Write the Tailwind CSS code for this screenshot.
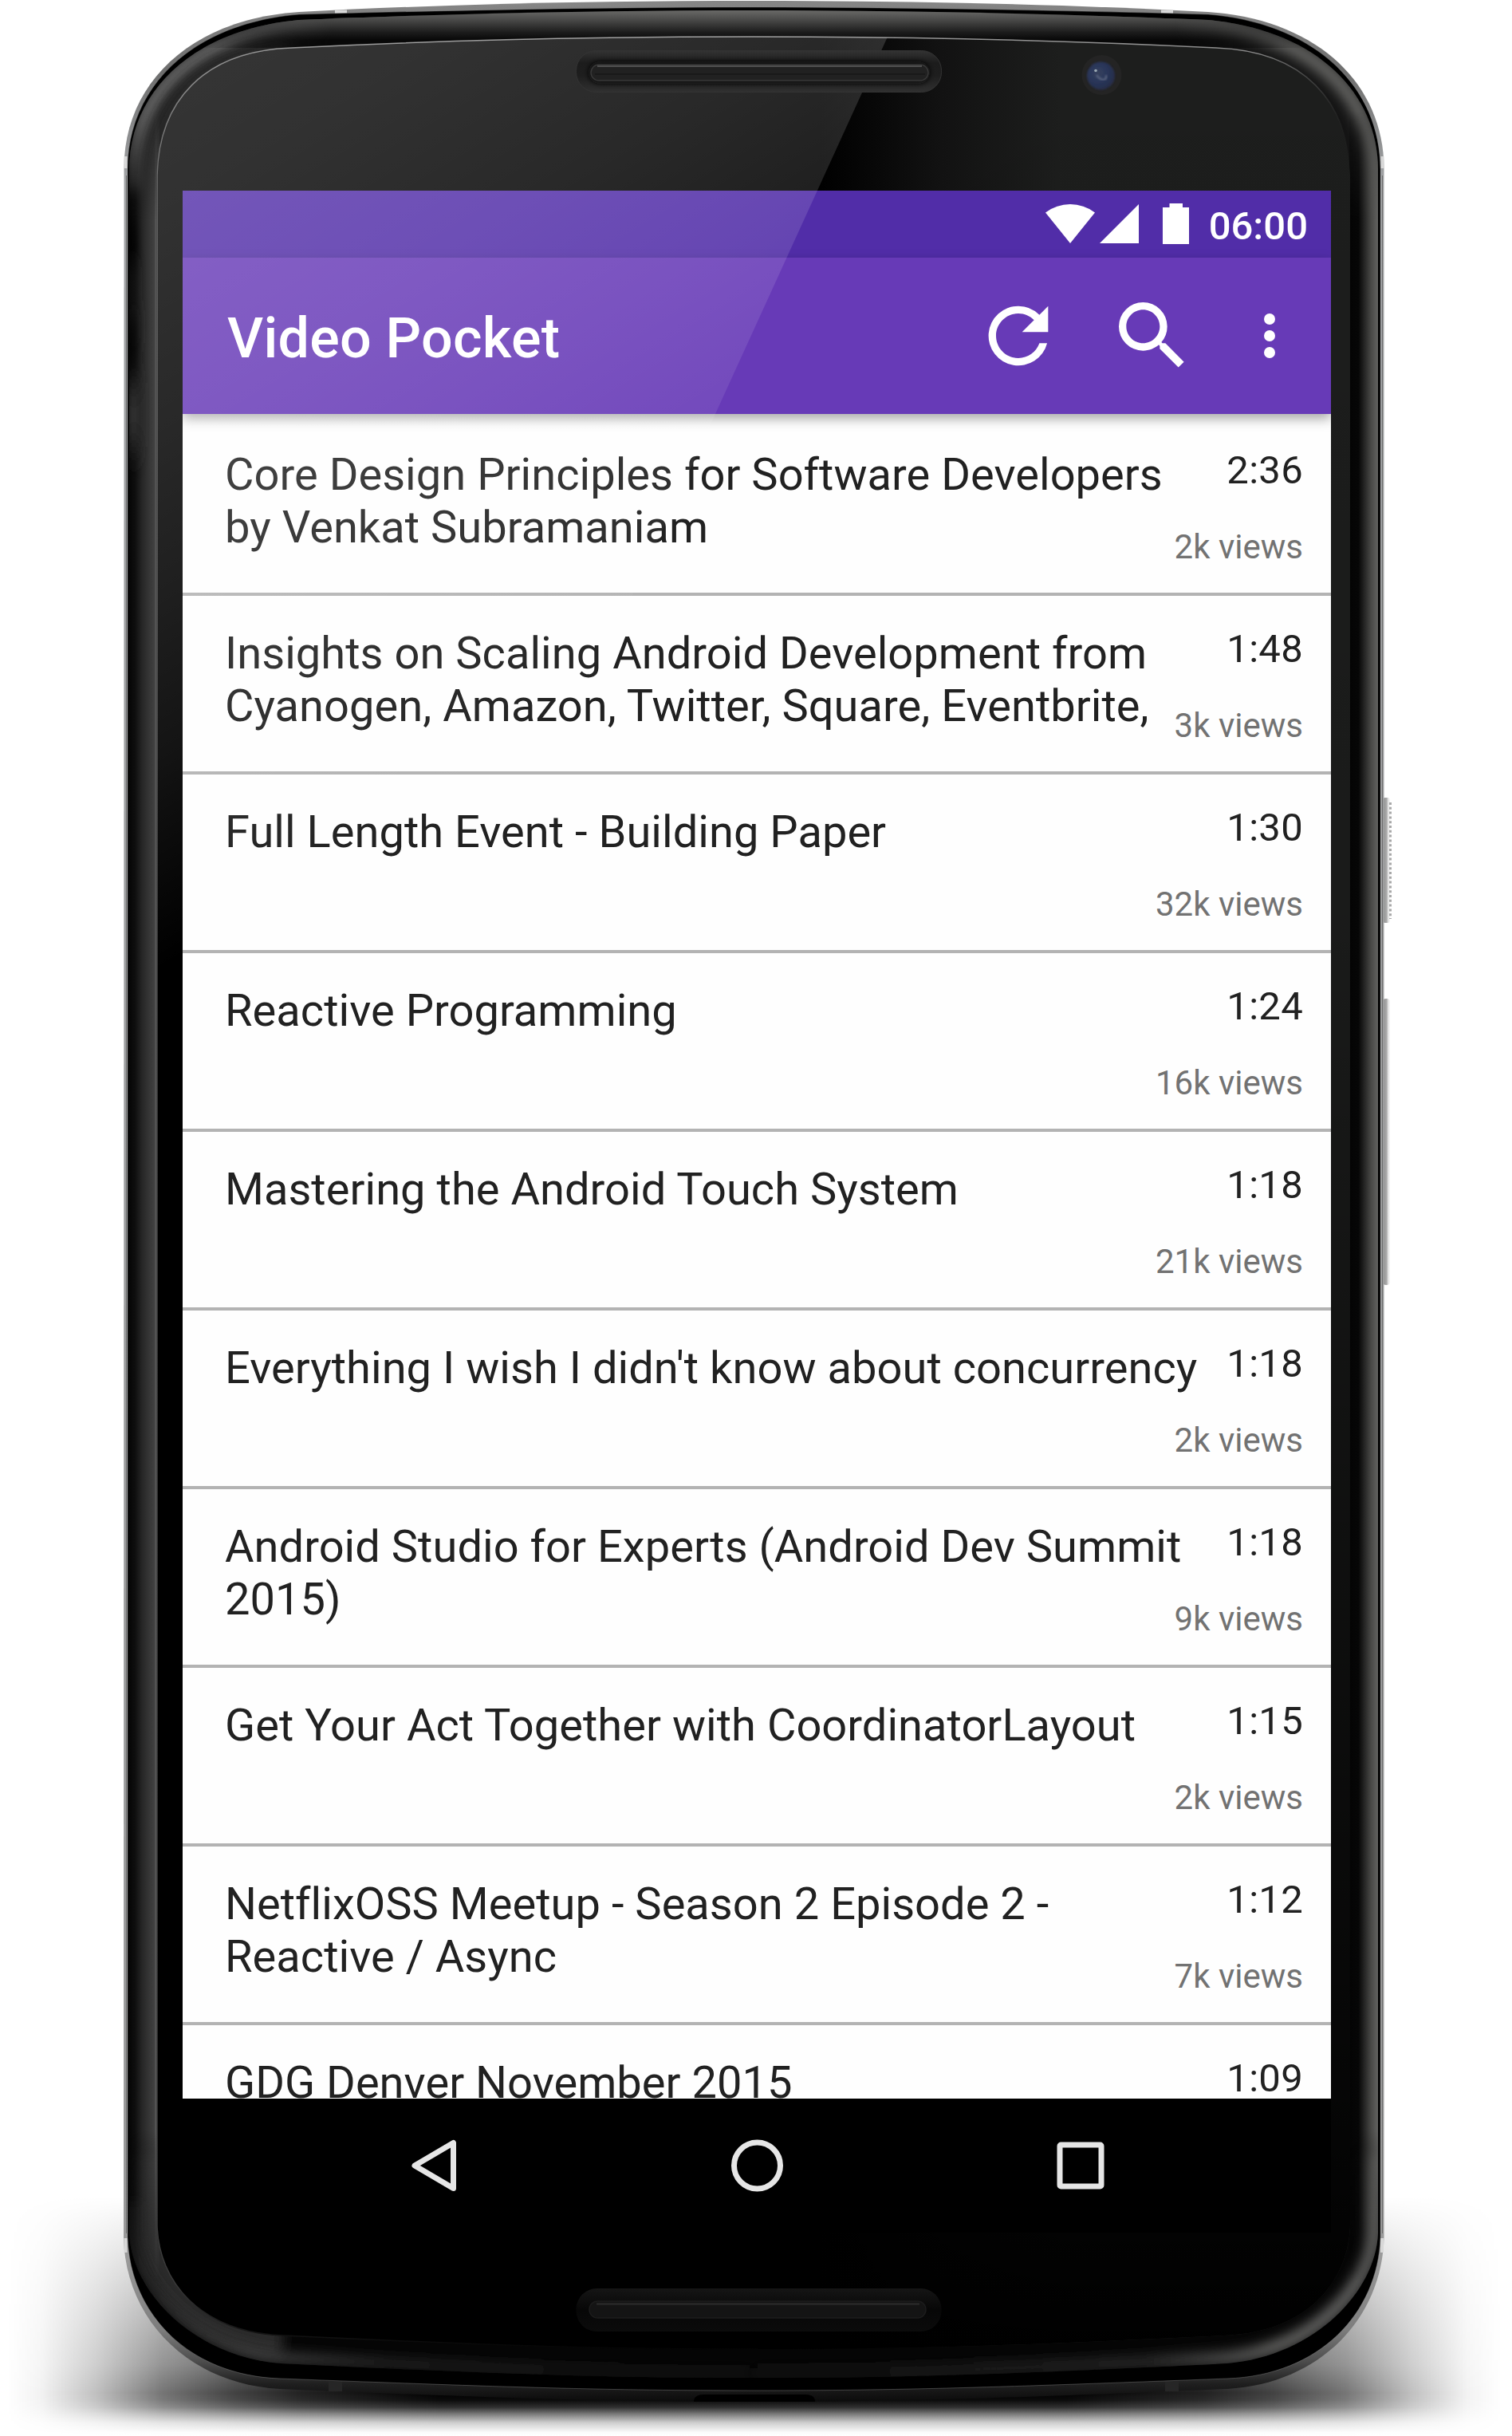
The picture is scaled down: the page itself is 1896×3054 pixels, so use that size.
<!DOCTYPE html>
<html lang="en">
<head>
<meta charset="utf-8">
<title>Video Pocket</title>
<script src="https://cdn.jsdelivr.net/npm/@tailwindcss/browser@4"></script>
</head>
<body class="bg-white">
<main class="relative w-[1896px] h-[3054px] overflow-hidden font-[Roboto,sans-serif]">

  <!-- Phone body -->
  <svg class="absolute inset-0" width="1896" height="3054" viewBox="0 0 1896 3054" fill="none" aria-hidden="true">
    <defs>
      <linearGradient id="shX" gradientUnits="userSpaceOnUse" x1="0" x2="1896" y1="0" y2="0">
        <stop offset="0.005" stop-color="#000" stop-opacity="0"/><stop offset="0.027" stop-color="#000" stop-opacity=".05"/>
        <stop offset="0.064" stop-color="#000" stop-opacity=".25"/><stop offset="0.107" stop-color="#000" stop-opacity=".54"/>
        <stop offset="0.155" stop-color="#000" stop-opacity=".74"/><stop offset="0.2" stop-color="#000" stop-opacity=".87"/>
        <stop offset="0.29" stop-color="#000"/><stop offset="0.705" stop-color="#000"/>
        <stop offset="0.797" stop-color="#000" stop-opacity=".87"/><stop offset="0.842" stop-color="#000" stop-opacity=".74"/>
        <stop offset="0.89" stop-color="#000" stop-opacity=".54"/><stop offset="0.933" stop-color="#000" stop-opacity=".25"/>
        <stop offset="0.97" stop-color="#000" stop-opacity=".05"/><stop offset="0.993" stop-color="#000" stop-opacity="0"/>
      </linearGradient>
      <linearGradient id="shY" gradientUnits="userSpaceOnUse" x1="0" x2="0" y1="2754" y2="3054">
        <stop offset="0" stop-color="#000"/><stop offset=".2" stop-color="#3a3a3a"/><stop offset=".45" stop-color="#808080"/>
        <stop offset=".7" stop-color="#c4c4c4"/><stop offset=".82" stop-color="#fff"/><stop offset=".85" stop-color="#f4f4f4"/><stop offset=".88" stop-color="#cfcfcf"/>
        <stop offset=".91" stop-color="#808080"/><stop offset=".945" stop-color="#303030"/><stop offset=".985" stop-color="#040404"/><stop offset="1" stop-color="#000"/>
      </linearGradient>
      <mask id="shM" maskUnits="userSpaceOnUse" x="0" y="2754" width="1896" height="300"><rect y="2754" width="1896" height="300" fill="url(#shY)"/></mask>
      <linearGradient id="metal" gradientUnits="userSpaceOnUse" x1="0" x2="0" y1="0" y2="3012">
        <stop offset="0" stop-color="#868686"/><stop offset=".03" stop-color="#6e6e6e"/><stop offset=".075" stop-color="#a2a4a6"/><stop offset=".94" stop-color="#9a9a9a"/>
        <stop offset=".97" stop-color="#7c7c7c"/><stop offset=".983" stop-color="#4c4c4c"/><stop offset=".992" stop-color="#202020"/><stop offset="1" stop-color="#0a0a0a"/>
      </linearGradient>
      <linearGradient id="leftRing" gradientUnits="userSpaceOnUse" x1="162" x2="198" y1="0" y2="0">
        <stop offset="0" stop-color="#060606"/><stop offset=".2" stop-color="#0e0e0e"/><stop offset=".45" stop-color="#262626"/><stop offset=".88" stop-color="#414141"/><stop offset=".93" stop-color="#5a5a5a"/><stop offset="1" stop-color="#4a4a4a"/>
      </linearGradient>
      <linearGradient id="rightRing" gradientUnits="userSpaceOnUse" x1="1693" x2="1728" y1="0" y2="0">
        <stop offset="0" stop-color="#040404"/><stop offset=".3" stop-color="#060606"/><stop offset=".75" stop-color="#484846"/><stop offset="1" stop-color="#626260"/>
      </linearGradient>
      <linearGradient id="topRing" gradientUnits="userSpaceOnUse" x1="0" x2="0" y1="12" y2="50">
        <stop offset="0" stop-color="#6c6c6a"/><stop offset=".35" stop-color="#484847"/><stop offset=".75" stop-color="#1c1c1c"/><stop offset="1" stop-color="#080808"/>
      </linearGradient>
      <linearGradient id="topFade" gradientUnits="userSpaceOnUse" x1="250" x2="1640" y1="0" y2="0">
        <stop offset="0" stop-color="#000"/><stop offset=".12" stop-color="#fff"/><stop offset=".88" stop-color="#fff"/><stop offset="1" stop-color="#000"/>
      </linearGradient>
      <mask id="topM" maskUnits="userSpaceOnUse" x="150" y="0" width="1600" height="100"><rect x="250" width="1390" height="100" fill="url(#topFade)"/></mask>
      <linearGradient id="fadeY" gradientUnits="userSpaceOnUse" x1="0" x2="0" y1="140" y2="2860">
        <stop offset="0" stop-color="#000"/><stop offset=".05" stop-color="#fff"/><stop offset=".93" stop-color="#fff"/><stop offset="1" stop-color="#000"/>
      </linearGradient>
      <mask id="sideM" maskUnits="userSpaceOnUse" x="150" y="0" width="1600" height="3054"><rect x="150" width="1600" height="3054" fill="url(#fadeY)"/></mask>
      <linearGradient id="glassR" gradientUnits="userSpaceOnUse" x1="1030" x2="1330" y1="0" y2="0">
        <stop offset="0" stop-color="#000"/><stop offset=".5" stop-color="#121212"/><stop offset="1" stop-color="#1d1e1d"/>
      </linearGradient>
      <linearGradient id="glassV" gradientUnits="userSpaceOnUse" x1="0" x2="0" y1="0" y2="2950">
        <stop offset="0" stop-color="#000" stop-opacity="0"/><stop offset=".4" stop-color="#000" stop-opacity=".12"/><stop offset=".9" stop-color="#000" stop-opacity=".82"/><stop offset="1" stop-color="#000"/>
      </linearGradient>
      <linearGradient id="edge" gradientUnits="userSpaceOnUse" x1="0" x2="0" y1="40" y2="2950">
        <stop offset="0" stop-color="#999"/><stop offset=".02" stop-color="#777"/><stop offset=".07" stop-color="#4a4a4a"/><stop offset=".92" stop-color="#3c3c3c"/><stop offset=".97" stop-color="#3a3a3a"/><stop offset=".99" stop-color="#181818"/><stop offset="1" stop-color="#000"/>
      </linearGradient>
      <linearGradient id="edgeX" gradientUnits="userSpaceOnUse" x1="197" x2="1693" y1="0" y2="0">
        <stop offset="0" stop-color="#fff"/><stop offset=".92" stop-color="#fff"/><stop offset="1" stop-color="#000"/>
      </linearGradient>
      <mask id="edgeM" maskUnits="userSpaceOnUse" x="150" y="0" width="1600" height="3054"><rect x="150" width="1600" height="2500" fill="url(#edgeX)"/><rect x="150" y="2500" width="800" height="554" fill="#fff"/></mask>
      <linearGradient id="btn" x1="0" x2="1" y1="0" y2="0"><stop offset="0" stop-color="#8c8c8c"/><stop offset=".55" stop-color="#ababab"/><stop offset=".75" stop-color="#e4e4e4"/><stop offset="1" stop-color="#f8f8f8"/></linearGradient>
      <linearGradient id="spk" x1="0" x2="0" y1="0" y2="1"><stop offset="0" stop-color="#333"/><stop offset=".3" stop-color="#1c1c1c"/><stop offset=".6" stop-color="#1e1e1e"/><stop offset="1" stop-color="#303030"/></linearGradient>
      <linearGradient id="spk2" x1="0" x2="0" y1="0" y2="1"><stop offset="0" stop-color="#151515"/><stop offset=".5" stop-color="#070707"/><stop offset="1" stop-color="#0b0b0b"/></linearGradient>
      <radialGradient id="lens" cx=".4" cy=".4" r=".65"><stop offset="0" stop-color="#36415c"/><stop offset=".5" stop-color="#29365a"/><stop offset="1" stop-color="#272c48"/></radialGradient>
      <linearGradient id="botL" gradientUnits="userSpaceOnUse" x1="165" x2="800" y1="0" y2="0"><stop offset="0" stop-color="#2c2c2c"/><stop offset=".25" stop-color="#585858"/><stop offset=".5" stop-color="#2c2c2c"/><stop offset="1" stop-color="#181818"/></linearGradient>
      <linearGradient id="botR" gradientUnits="userSpaceOnUse" x1="1725" x2="1090" y1="0" y2="0"><stop offset="0" stop-color="#767674"/><stop offset=".2" stop-color="#747472"/><stop offset=".45" stop-color="#2c2c2c"/><stop offset="1" stop-color="#181818"/></linearGradient>
      <filter id="b8" filterUnits="userSpaceOnUse" x="100" y="-60" width="1700" height="3150"><feGaussianBlur stdDeviation="8"/></filter>
      <filter id="b3" x="-20%" y="-60%" width="140%" height="220%"><feGaussianBlur stdDeviation="3"/></filter>
      <filter id="b1"><feGaussianBlur stdDeviation="0.8"/></filter>
      <filter id="bSide" filterUnits="userSpaceOnUse" x="100" y="100" width="150" height="600"><feGaussianBlur stdDeviation="5 22"/></filter>
      <clipPath id="ringClip"><path d="M162 213C162 114 242 37 375 25C560 17 760 13 945 13C1130 13 1330 17 1515 25C1648 37 1728 114 1728 213V2800C1725 2872 1650 2953 1539 2963C1250 2977 1130 2981 945 2981C760 2981 640 2977 351 2963C240 2953 165 2872 162 2800Z"/></clipPath>
      <clipPath id="glassClip"><path d="M197 220C199 127 255 64 365 60C560 50 760 46 945 46C1130 46 1330 50 1525 60C1635 64 1691 127 1693 220V2790C1691 2860 1640 2924 1535 2928C1250 2942 1130 2945 945 2945C760 2945 640 2942 355 2928C250 2924 199 2860 197 2790Z"/></clipPath>
    </defs>

    <!-- ground shadow -->
    <rect y="2754" width="1896" height="300" fill="url(#shX)" mask="url(#shM)"/>

    <!-- power and volume keys -->
    <rect x="1734" y="1000" width="9" height="157" rx="3" fill="url(#btn)"/>
    <path d="M1743.500 1006V1152" stroke="#a8a8a8" stroke-width="3" stroke-dasharray="3 2.800"/>
    <rect x="1734" y="1252" width="9" height="359" rx="4" fill="url(#btn)"/>

    <!-- metal rim -->
    <path fill="url(#metal)" d="M155.500 210C156 105 238 24 375 15C560 5 760 1 945 1C1130 1 1330 5 1515 15C1652 24 1734.500 105 1735.500 210V2805C1733 2905 1657 2988 1539 2995C1250 3007 1130 3011 945 3011C760 3011 640 3007 351 2995C233 2988 157 2905 155 2805Z"/>
    <path d="M158.500 220V2800M1733.500 220V2800" stroke="#6c6c6c" stroke-width="1"/>
    <path d="M420 12.500h15v6h-15zM1456 12.500h15v6h-15zM155.500 196h4v15h-4zM1731.500 196h4v15h-4zM155.500 2806h4v18h-4zM1731 2806h4v18h-4z" fill="#d8d8d8"/>
    <path d="M412 2984h17v14h-17zM1461 2984h17v14h-17z" fill="#262626"/>
    <path d="M870 3011V3009Q872 3002 882 3002H1010Q1020 3002 1022 3009V3011Z" fill="#000"/>
    <!-- dark gasket -->
    <path fill="#000" stroke="#8a8a8a" stroke-opacity=".4" stroke-width="1" d="M160 212C160 110 240 29 375 18C560 13 760 9 945 9C1130 9 1330 13 1515 18C1650 29 1731 110 1731 212V2805C1728 2900 1654 2978 1539 2982C1250 2993 1130 2997 945 2997C760 2997 640 2993 351 2982C236 2978 163 2900 160 2805Z"/>

    <!-- rounded bezel -->
    <g clip-path="url(#ringClip)">
      <rect x="155" y="0" width="1580" height="3000" fill="#141414"/>
      <rect x="155" y="2600" width="1580" height="400" fill="#050505"/>
      <path d="M190 2700V2795C193 2860 245 2925 355 2936" stroke="#2a2a2a" stroke-width="34" filter="url(#b8)"/>
      <path d="M168 2760V2800C171 2868 244 2946 351 2956C640 2971 760 2975 945 2975" stroke="url(#botL)" stroke-width="10" filter="url(#b8)"/>
      <path d="M1722 2700V2800C1719 2868 1646 2946 1539 2956C1250 2971 1130 2975 945 2975" stroke="url(#botR)" stroke-width="14" filter="url(#b8)"/>
      <path d="M168 240V213C168 118 246 44 375 31H520" stroke="#6e6e6e" stroke-width="18" filter="url(#b8)"/>
      <path d="M1722 330V213C1722 118 1644 44 1515 31H1370" stroke="#6e6e6c" stroke-width="16" filter="url(#b8)"/>
      <path d="M193 330V220C196 130 250 70 365 58" stroke="#2c2c2c" stroke-width="20" filter="url(#b8)"/>
      <rect x="155" y="0" width="1580" height="60" fill="url(#topRing)" mask="url(#topM)"/>
      <g mask="url(#sideM)">
        <rect x="160" y="140" width="40" height="2720" fill="url(#leftRing)"/>
        <rect x="1692" y="140" width="38" height="2720" fill="url(#rightRing)"/>
      </g>
      <path d="M166 340V350M168 400V420M168 480V560" stroke="#2e2e2e" stroke-width="20" filter="url(#bSide)"/>
      <path d="M163 285V325M163 405V445" stroke="#000" stroke-width="18" filter="url(#bSide)"/>
    </g>

    <!-- front glass -->
    <g clip-path="url(#glassClip)">
      <rect x="190" y="40" width="1510" height="2910" fill="url(#glassR)"/>
      <rect x="190" y="40" width="1510" height="2910" fill="url(#glassV)"/>
    </g>
    <path mask="url(#edgeM)" stroke="url(#edge)" stroke-width="1.500" d="M197 220C199 127 255 64 365 60C560 50 760 46 945 46C1130 46 1330 50 1525 60C1635 64 1691 127 1693 220V2790C1691 2860 1640 2924 1535 2928C1250 2942 1130 2945 945 2945C760 2945 640 2942 355 2928C250 2924 199 2860 197 2790Z"/>

    <!-- camera -->
    <circle cx="1381.500" cy="94" r="25" fill="#242424"/>
    <circle cx="1380.500" cy="95" r="17.500" fill="url(#lens)" filter="url(#b1)"/>
    <path d="M1387 94q1 5-3 6q-5 0-9-6" stroke="#56617c" stroke-width="2.500" filter="url(#b1)"/>
    <circle cx="1374" cy="88.500" r="1.800" fill="#9aa9b4"/>

    <!-- lower speaker -->
    <rect x="722.500" y="2869" width="458" height="54" rx="26" fill="url(#spk2)"/>
    <rect x="739" y="2885" width="422" height="21" rx="10.500" fill="#141414" stroke="#1c1c1c" stroke-width="1.500"/>
    <path d="M748 2888.500H1153" stroke="#2c2c2c" stroke-width="2"/>
  </svg>

  <!-- Screen -->
  <div class="relative isolate ml-[229px] mt-[239px] flex h-[2560px] w-[1440px] flex-col overflow-hidden bg-white">
    <div class="flex h-[84px] shrink-0 items-start justify-end bg-[#512da8] pr-[29px] text-white">
      <svg class="mt-[15px]" width="182" height="54" viewBox="1310 254 182 54" fill="#fff" aria-hidden="true">
        <path d="M1311 266.500Q1325 256 1342 256T1373 266.500L1342 305Z"/>
        <path d="M1379 305L1428 256V305Z"/>
        <path d="M1466.500 255H1483V260H1491V306H1458V260H1466.500Z"/>
      </svg>
      <span class="ml-[24px] mt-[16px] text-[49px] font-medium leading-[58px]">06:00</span>
    </div>
    <header class="relative z-10 flex h-[196px] shrink-0 items-center bg-[#673ab7] pl-[56px] pr-[14px] text-white shadow-[0_6px_14px_rgba(0,0,0,0.34)]">
      <h1 class="mt-[6px] flex-1 text-[70px] font-medium leading-[82px] tracking-[0.25px]">Video Pocket</h1>
      <button class="flex size-[168px] items-center justify-center" aria-label="Refresh">
        <svg class="size-28" viewBox="0 0 24 24" fill="#fff"><path d="M17.650 6.350A7.958 7.958 0 0 0 12 4a8 8 0 1 0 7.730 10h-2.080A5.990 5.990 0 0 1 12 18c-3.310 0-6-2.690-6-6s2.690-6 6-6c1.660 0 3.140.69 4.220 1.780L13 11h7V4z"/></svg>
      </button>
      <button class="flex size-[168px] items-center justify-center" aria-label="Search">
        <svg class="size-28" viewBox="0 0 24 24" fill="#fff"><path d="M15.500 14h-.79l-.28-.27A6.471 6.471 0 0 0 16 9.500 6.500 6.500 0 1 0 9.500 16c1.610 0 3.090-.59 4.230-1.570l.27.28v.79l5 4.990L20.490 19zm-6 0C7.010 14 5 11.990 5 9.500S7.010 5 9.500 5 14 7.010 14 9.500 11.990 14 9.500 14z"/></svg>
      </button>
      <button class="flex h-[168px] w-[126px] items-center justify-center" aria-label="More options">
        <svg class="size-[84px]" viewBox="0 0 24 24" fill="#fff"><circle cx="12" cy="6" r="2"/><circle cx="12" cy="12" r="2"/><circle cx="12" cy="18" r="2"/></svg>
      </button>
    </header>

    <ul id="videos" class="min-h-0 flex-1 overflow-hidden bg-[#fefefe] pt-1 text-[#212121]"></ul>

    <nav class="flex h-[168px] shrink-0 items-center justify-center bg-black">
      <svg width="880" height="70" viewBox="509 2680.500 880 70" fill="none" stroke="#e6e6e6" stroke-width="7" stroke-linejoin="round" aria-hidden="true">
        <path d="M520 2715.500L568.500 2687V2744Z"/>
        <circle cx="949.500" cy="2715.500" r="29"/>
        <rect x="1329" y="2689.500" width="52" height="52" rx="1.500"/>
      </svg>
    </nav>
  </div>

  <!-- Reflection across glass and screen, with the earpiece above it -->
  <svg class="pointer-events-none absolute inset-0" width="1896" height="3054" viewBox="0 0 1896 3054" fill="none" aria-hidden="true">
    <defs>
      <linearGradient id="gloss" gradientUnits="userSpaceOnUse" x1="229" y1="100" x2="714" y2="909">
        <stop offset="0" stop-color="#fff" stop-opacity=".205"/><stop offset=".13" stop-color="#fff" stop-opacity=".195"/>
        <stop offset=".38" stop-color="#fff" stop-opacity=".16"/><stop offset=".56" stop-color="#fff" stop-opacity=".125"/>
        <stop offset=".75" stop-color="#fff" stop-opacity=".08"/><stop offset=".84" stop-color="#fff" stop-opacity=".05"/>
        <stop offset="1" stop-color="#fff" stop-opacity="0"/>
      </linearGradient>
    </defs>
    <path clip-path="url(#glassClip)" fill="url(#gloss)" d="M190 40H1115.800L600 1169L190 1400Z"/>
    <rect x="722.500" y="63.500" width="458" height="52" rx="25" fill="url(#spk)" stroke="#333" stroke-width="1"/>
    <rect x="738" y="77" width="428" height="28" rx="14" fill="#0c0c0c" filter="url(#b3)"/>
    <rect x="741" y="81" width="423" height="20" rx="10" fill="#212121" stroke="#383838" stroke-width="1.500"/>
    <path d="M749 83H1156" stroke="#505050" stroke-width="2"/>
    <path d="M746 93H1160" stroke="#191919" stroke-width="2"/>
  </svg>
</main>

<script>
  const videos = [
    ["Core Design Principles for Software Developers<br>by Venkat Subramaniam", "2:36", "2k views"],
    ["Insights on Scaling Android Development from<br>Cyanogen, Amazon, Twitter, Square, Eventbrite,", "1:48", "3k views"],
    ["Full Length Event - Building Paper", "1:30", "32k views"],
    ["Reactive Programming", "1:24", "16k views"],
    ["Mastering the Android Touch System", "1:18", "21k views"],
    ["Everything I wish I didn't know about concurrency", "1:18", "2k views"],
    ["Android Studio for Experts (Android Dev Summit<br>2015)", "1:18", "9k views"],
    ["Get Your Act Together with CoordinatorLayout", "1:15", "2k views"],
    ["NetflixOSS Meetup - Season 2 Episode 2 -<br>Reactive / Async", "1:12", "7k views"],
    ["GDG Denver November 2015", "1:09", ""]
  ];
  document.getElementById("videos").innerHTML = videos.map(([title, time, views]) => `
    <li class="flex h-[224px] justify-between border-b-4 border-[#b3b3b3] pl-[53px] pr-[35px]">
      <p class="mt-[39px] whitespace-nowrap text-[56px] leading-[66px] tracking-[0.04px]">${title}</p>
      <div class="flex w-0 flex-col items-end whitespace-nowrap">
        <span class="mt-[38px] text-[49px] leading-[58px] tracking-[0.3px]">${time}</span>
        <span class="mt-[42px] text-[42px] leading-[50px] text-[#727272]">${views}</span>
      </div>
    </li>`).join("");
</script>
</body>
</html>
